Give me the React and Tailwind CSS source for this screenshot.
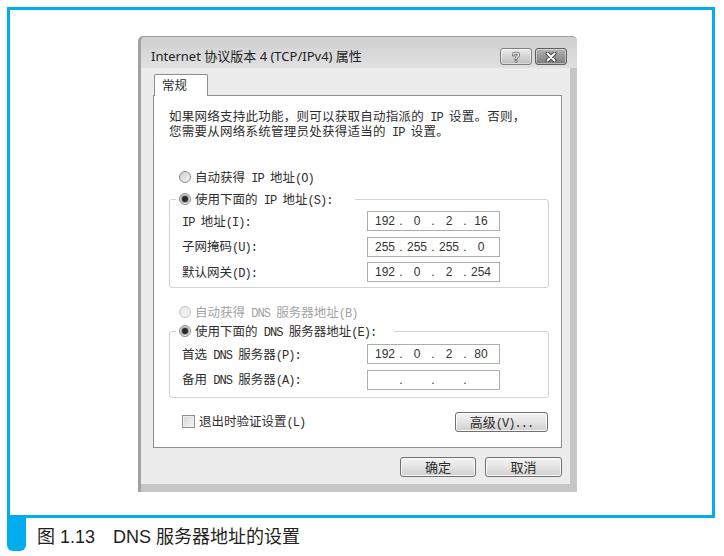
import { Fragment } from 'react';

// Latin runs inside the dialog use a narrow monospace, CJK falls through to Noto
const latinRun = "font-['Liberation_Mono'] text-[12px] leading-none tracking-[-0.95px]";

function Sim({ text }) {
  return (
    <span className="whitespace-pre">
      {text
        .split(/([\x20-\x7e]+)/)
        .filter(Boolean)
        .map((part, i) =>
          /^[\x20-\x7e]+$/.test(part) ? (
            <span key={i} className={latinRun}>{part}</span>
          ) : (
            <span key={i}>{part}</span>
          )
        )}
    </span>
  );
}

function Radio({ checked, disabled }) {
  return (
    <span
      className={`flex h-[12px] w-[12px] shrink-0 items-center justify-center rounded-full border ${
        disabled
          ? 'border-[#c4c4c4] bg-linear-to-br from-[#e6e6e6] to-[#f7f7f7]'
          : 'border-[#8a8a8a] bg-linear-to-br from-[#cfcfcf] to-[#f5f5f5]'
      }`}
    >
      {checked && <span className="h-[6px] w-[6px] rounded-full bg-[#2a2a2a] shadow-[0_0_0_1px_#a0a0a0]" />}
    </span>
  );
}

function IpBox({ parts }) {
  return (
    <div className="flex h-[20px] w-[133px] items-center border border-[#adadad] bg-white pl-[4px] font-['Liberation_Sans',sans-serif] text-[12px] text-[#333]">
      {parts.map((p, i) => (
        <Fragment key={i}>
          {i > 0 && <span className="w-[6px] text-center">.</span>}
          <span className="w-[26px] text-center">{p}</span>
        </Fragment>
      ))}
    </div>
  );
}

function Row({ label, parts }) {
  return (
    <div className="flex h-[20px] items-center">
      <span className="w-[185px]">
        <Sim text={label} />
      </span>
      <IpBox parts={parts} />
    </div>
  );
}

function WinButton({ children, className = '' }) {
  return (
    <button
      className={`flex h-[20px] items-center justify-center rounded-[3px] border border-[#707070] bg-linear-to-b from-[#f4f4f4] via-[#e4e4e4] to-[#cfcfcf] text-[13px] text-[#2a2a2a] shadow-[inset_0_0_0_1px_#fbfbfb] ${className}`}
    >
      {children}
    </button>
  );
}

function CaptionButton({ dark, children }) {
  return (
    <div
      className={`flex h-[17px] w-[32px] items-center justify-center rounded-[3px] border ${
        dark
          ? 'border-[#5e5e5e] bg-linear-to-b from-[#b4b4b4] to-[#7c7c7c]'
          : 'border-[#7e7e7e] bg-linear-to-b from-[#ececec] to-[#bdbdbd]'
      } shadow-[inset_0_0_0_1px_rgba(255,255,255,0.45)]`}
    >
      {children}
    </div>
  );
}

export default function App() {
  return (
    <div className="h-[556px] w-[724px] overflow-hidden bg-white pl-[7px] pt-[7px] text-[#2d2d2d]">
      {/* blue figure frame */}
      <div className="h-[511px] w-[708px] border-[3px] border-[#00aeef] pt-[26px] pl-[128px]">
        {/* dialog window */}
        <div className="flex h-[456px] w-[439px] flex-col rounded-t-[5px] border-l-[3px] border-t border-[#a2a2a2] bg-[#c6c6c6] font-['Noto_Sans_CJK_SC',sans-serif]">
          <div className="flex h-[31px] items-start justify-between rounded-t-[5px] bg-linear-to-b from-[#d0d0d0] to-[#e0e0e0] pl-[10px] pr-[10px] pt-[11px]">
            <span className="font-['Noto_Sans','Noto_Sans_CJK_SC',sans-serif] text-[13px] leading-[17px] text-[#222]">
              Internet 协议版本 4 (TCP/IPv4) 属性
            </span>
            <div className="flex gap-[3px]">
              <CaptionButton>
                <svg width="10" height="12" viewBox="0 0 10 12">
                  <path d="M2.5 4 C2.5 1.5 7.5 1.5 7.5 4 C7.5 5.8 5 5.8 5 7.6" fill="none" stroke="#666" strokeWidth="3" strokeLinecap="round" />
                  <circle cx="5" cy="10.3" r="1.5" fill="#666" />
                  <path d="M2.5 4 C2.5 1.5 7.5 1.5 7.5 4 C7.5 5.8 5 5.8 5 7.6" fill="none" stroke="#fff" strokeWidth="1.2" strokeLinecap="round" />
                  <circle cx="5" cy="10.3" r="0.7" fill="#fff" />
                </svg>
              </CaptionButton>
              <CaptionButton dark>
                <svg width="12" height="10" viewBox="0 0 12 10">
                  <path d="M2.5 1.5 L9.5 8.5 M9.5 1.5 L2.5 8.5" stroke="#444" strokeWidth="4" strokeLinecap="round" />
                  <path d="M2.5 1.5 L9.5 8.5 M9.5 1.5 L2.5 8.5" stroke="#fff" strokeWidth="2" strokeLinecap="round" />
                </svg>
              </CaptionButton>
            </div>
          </div>

          {/* client area */}
          <div className="mb-[8px] mr-[7px] flex flex-1 flex-col bg-[#ececec] pl-[12px] pr-[8px] pt-[6px]">
            <div className="relative z-10 -mb-px ml-[1px] flex h-[22px] w-[54px] items-center rounded-t-[2px] border border-b-0 border-[#8e8e8e] bg-white pl-[7px] text-[12.5px]">
              常规
            </div>
            <div className="h-[353px] border border-[#8e8e8e] bg-white pl-[15px] pr-[12px] text-[12.5px]">
              <p className="mt-[13px] h-[26px] leading-[13px] tracking-[0.25px]">
                <Sim text="如果网络支持此功能，则可以获取自动指派的 IP 设置。否则，" />
                <br />
                <Sim text="您需要从网络系统管理员处获得适当的 IP 设置。" />
              </p>

              <div className="mt-[34px] flex h-[16px] items-center gap-[4px] pl-[10px]">
                <Radio />
                <Sim text="自动获得 IP 地址(O)" />
              </div>

              <fieldset className="mt-[6px] rounded-[3px] border border-[#d2d2d2] pb-[5px] pt-[4px]">
                <legend className="ml-[6px] flex h-[16px] items-center gap-[4px] pl-[3px] pr-[22px]">
                  <Radio checked />
                  <Sim text="使用下面的 IP 地址(S):" />
                </legend>
                <div className="flex flex-col gap-[5.5px] pl-[12px]">
                  <Row label="IP 地址(I):" parts={['192', '0', '2', '16']} />
                  <Row label="子网掩码(U):" parts={['255', '255', '255', '0']} />
                  <Row label="默认网关(D):" parts={['192', '0', '2', '254']} />
                </div>
              </fieldset>

              <div className="mt-[16px] flex h-[16px] items-center gap-[4px] pl-[10px] text-[#a3a3a3]">
                <Radio disabled />
                <Sim text="自动获得 DNS 服务器地址(B)" />
              </div>

              <fieldset className="mt-[3px] rounded-[3px] border border-[#d2d2d2] pb-[7px] pt-[5px]">
                <legend className="ml-[6px] flex h-[16px] items-center gap-[4px] pl-[3px] pr-[18px]">
                  <Radio checked />
                  <Sim text="使用下面的 DNS 服务器地址(E):" />
                </legend>
                <div className="flex flex-col gap-[5.5px] pl-[12px]">
                  <Row label="首选 DNS 服务器(P):" parts={['192', '0', '2', '80']} />
                  <Row label="备用 DNS 服务器(A):" parts={['', '', '', '']} />
                </div>
              </fieldset>

              <div className="mt-[14px] flex h-[20px] items-center justify-between pl-[13px] pr-[1px]">
                <div className="flex items-center gap-[4px]">
                  <span className="h-[13px] w-[13px] border border-[#8e8f8f] bg-linear-to-br from-[#d6d6d6] to-[#f6f6f6] shadow-[inset_0_0_0_1px_#f0f0f0]" />
                  <Sim text="退出时验证设置(L)" />
                </div>
                <WinButton className="w-[93px]">
                  <Sim text="高级(V)..." />
                </WinButton>
              </div>
            </div>

            <div className="mt-[9px] flex justify-end gap-[9px]">
              <WinButton className="w-[76px]">确定</WinButton>
              <WinButton className="w-[77px]">取消</WinButton>
            </div>
          </div>
        </div>
      </div>

      {/* figure caption */}
      <div className="flex">
        <div className="h-[33px] w-[19px] rounded-b-[6px] bg-[#00aeef]" />
        <div className="ml-[11px] mt-[7px] font-['Liberation_Sans','Noto_Sans_CJK_SC',sans-serif] text-[18px] leading-[24px] text-[#231f20]">
          图 1.13{'\u3000'}DNS 服务器地址的设置
        </div>
      </div>
    </div>
  );
}
